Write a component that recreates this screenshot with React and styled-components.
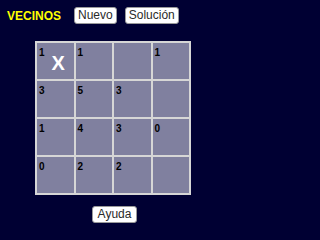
import React from "react";
import styled, { createGlobalStyle } from "styled-components";

const Global = createGlobalStyle`
  html, body { margin: 0; padding: 0; background: #000033; }
  body { font-family: "Liberation Sans", Arial, sans-serif; width: 256px; height: 240px; overflow: hidden; }
`;

const Page = styled.div`
  width: 256px;
  height: 240px;
  background: #000033;
  display: flex;
  flex-direction: column;
`;

const Header = styled.div`
  display: flex;
  align-items: center;
  height: 17px;
  padding: 7px 0 0 7px;
`;

const Title = styled.span`
  color: #ffff00;
  font-weight: bold;
  font-size: 12px;
  margin-right: 13px;
`;

const Button = styled.button`
  box-sizing: border-box;
  height: 17px;
  padding: 0 ${(p) => p.$pad || 3}px;
  margin-right: ${(p) => p.$gap || 0}px;
  background: #ffffff;
  border: 1px solid #9a9a9a;
  border-radius: 3px;
  font-family: "Liberation Sans", Arial, sans-serif;
  font-size: 12px;
  color: #2a2a2a;
  line-height: 15px;
  cursor: pointer;
`;

const Main = styled.div`
  width: 156px;
  margin: 17px 0 0 35px;
  display: flex;
  flex-direction: column;
  align-items: center;
`;

const Board = styled.div`
  box-sizing: border-box;
  width: 156px;
  height: 154px;
  display: grid;
  grid-template-columns: repeat(4, 1fr);
  grid-template-rows: repeat(4, 1fr);
  gap: 2px;
  padding: 2px;
  background: #d6d6d6;
`;

const Cell = styled.div`
  position: relative;
  background: #80809f;
  display: flex;
  align-items: center;
  justify-content: center;
  padding: 3px 0 0 6px;
  box-sizing: border-box;
`;

const Num = styled.span`
  position: absolute;
  left: 2px;
  top: 4px;
  font-size: 10px;
  font-weight: bold;
  color: #000;
  line-height: 11px;
`;

const Mark = styled.span`
  color: #ffffff;
  font-size: 20px;
  font-weight: bold;
  line-height: 20px;
`;

const Footer = styled.div`
  margin-top: 11px;
  padding-left: 3px;
  display: flex;
  justify-content: center;
`;

const cells = [
  ["1", "1", "", "1"],
  ["3", "5", "3", ""],
  ["1", "4", "3", "0"],
  ["0", "2", "2", ""],
];

export default function App() {
  return (
    <Page>
      <Global />
      <Header>
        <Title>VECINOS</Title>
        <Button $gap={8}>Nuevo</Button>
        <Button>Solución</Button>
      </Header>
      <Main>
        <Board>
          {cells.flatMap((row, r) =>
            row.map((v, c) => (
              <Cell key={`${r}-${c}`}>
                {v && <Num>{v}</Num>}
                {r === 0 && c === 0 && <Mark>X</Mark>}
              </Cell>
            ))
          )}
        </Board>
        <Footer>
          <Button $pad={5}>Ayuda</Button>
        </Footer>
      </Main>
    </Page>
  );
}
